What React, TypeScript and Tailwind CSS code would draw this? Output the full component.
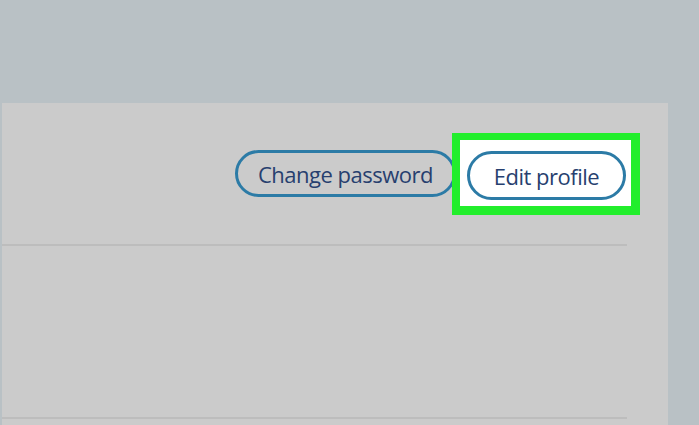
export default function App() {
  return (
    <div className="h-[425px] w-[699px] overflow-hidden bg-[#b9c1c5] pt-[103px] pl-[2px] font-['Open_Sans',sans-serif]">
      <div className="h-full w-[666px] bg-[#cbcbcb]">
        <div className="flex h-[141px] items-center justify-end pr-[28px]">
          <button className="h-[47px] w-[221px] rounded-full border-[3px] border-[#2c7ba6] pt-[2px] text-[22px] tracking-[-0.5px] text-[#273f6f]">
            Change password
          </button>
          <div className="-ml-[4px] border-t-[7px] border-r-[9px] border-b-[9px] border-l-[8px] border-[#22ee2c] bg-white pt-[11px] pr-[5px] pb-[6px] pl-[7px]">
            <button className="block h-[49px] w-[159px] rounded-full border-[3px] border-[#2c7ba6] bg-white pt-[2px] text-[22px] tracking-[-0.5px] text-[#273f6f]">
              Edit profile
            </button>
          </div>
        </div>
        <div className="mr-[41px] h-[2px] bg-[#bdbdbd]" />
        <div className="h-[171px]" />
        <div className="mr-[41px] h-[2px] bg-[#bdbdbd]" />
      </div>
    </div>
  );
}
